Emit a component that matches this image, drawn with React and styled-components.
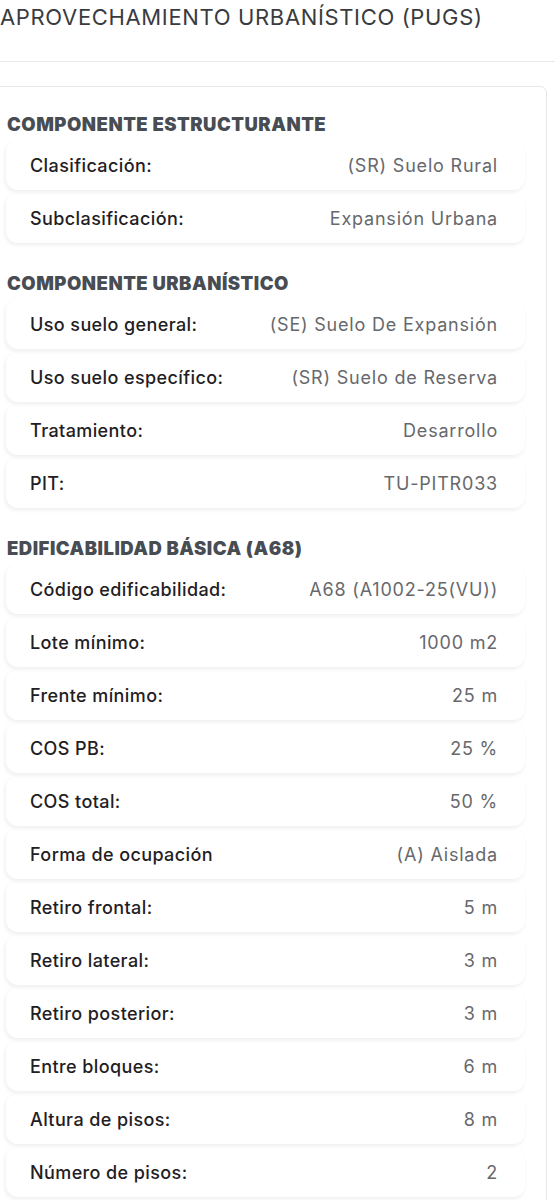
import styled, { createGlobalStyle } from "styled-components";

const GlobalStyle = createGlobalStyle`
    body {
        margin: 0;
        background: #ffffff;
        font-family: Inter, "Liberation Sans", sans-serif;
        overflow-x: hidden;
    }
`;

const Page = styled.div`
    width: 555px;
`;

const Header = styled.header`
    height: 62px;
    border-bottom: 1px solid #e8e8e8;
    box-sizing: border-box;
`;

const PageTitle = styled.h1`
    margin: 0;
    padding: 4px 0 0 0;
    font-size: 22px;
    font-weight: 400;
    line-height: 26px;
    letter-spacing: 0.65px;
    color: #3a3b3e;
    white-space: nowrap;
`;

const Card = styled.div`
    margin: 24px 8px 20px -10px;
    border: 1px solid #e6e6e8;
    border-radius: 7px;
    padding: 27px 21px 10px 16px;
`;

const SectionTitle = styled.h3`
    margin: ${(p) => (p.$first ? "0" : "30px")} 0 6px 0;
    font-size: 18.5px;
    line-height: 20px;
    font-weight: 900;
    color: #484c53;
    letter-spacing: 0.5px;
    white-space: nowrap;
`;

const RowList = styled.div`
    display: flex;
    flex-direction: column;
    gap: 3px;
    margin-left: -1px;
`;

const Row = styled.div`
    display: flex;
    align-items: center;
    justify-content: space-between;
    height: 50px;
    padding: 0 27px 0 24px;
    border-radius: 12px;
    box-shadow: -1px 2px 4px rgba(0, 0, 0, 0.07);
    font-size: 18px;
`;

const Label = styled.span`
    color: #1f2023;
    font-weight: 500;
    letter-spacing: 0.4px;
`;

const Value = styled.span`
    color: #67686c;
    font-weight: 400;
    letter-spacing: 0.8px;
    text-align: right;
`;

const sections = [
    {
        title: "COMPONENTE ESTRUCTURANTE",
        rows: [
            ["Clasificación:", "(SR) Suelo Rural"],
            ["Subclasificación:", "Expansión Urbana"],
        ],
    },
    {
        title: "COMPONENTE URBANÍSTICO",
        rows: [
            ["Uso suelo general:", "(SE) Suelo De Expansión"],
            ["Uso suelo específico:", "(SR) Suelo de Reserva"],
            ["Tratamiento:", "Desarrollo"],
            ["PIT:", "TU-PITR033"],
        ],
    },
    {
        title: "EDIFICABILIDAD BÁSICA (A68)",
        rows: [
            ["Código edificabilidad:", "A68 (A1002-25(VU))"],
            ["Lote mínimo:", "1000 m2"],
            ["Frente mínimo:", "25 m"],
            ["COS PB:", "25 %"],
            ["COS total:", "50 %"],
            ["Forma de ocupación", "(A) Aislada"],
            ["Retiro frontal:", "5 m"],
            ["Retiro lateral:", "3 m"],
            ["Retiro posterior:", "3 m"],
            ["Entre bloques:", "6 m"],
            ["Altura de pisos:", "8 m"],
            ["Número de pisos:", "2"],
        ],
    },
];

export default function App() {
    return (
        <Page>
            <GlobalStyle />
            <Header>
                <PageTitle>APROVECHAMIENTO URBANÍSTICO (PUGS)</PageTitle>
            </Header>
            <Card>
                {sections.map((section, i) => (
                    <div key={section.title}>
                        <SectionTitle $first={i === 0}>{section.title}</SectionTitle>
                        <RowList>
                            {section.rows.map(([label, value]) => (
                                <Row key={label}>
                                    <Label>{label}</Label>
                                    <Value>{value}</Value>
                                </Row>
                            ))}
                        </RowList>
                    </div>
                ))}
            </Card>
        </Page>
    );
}
